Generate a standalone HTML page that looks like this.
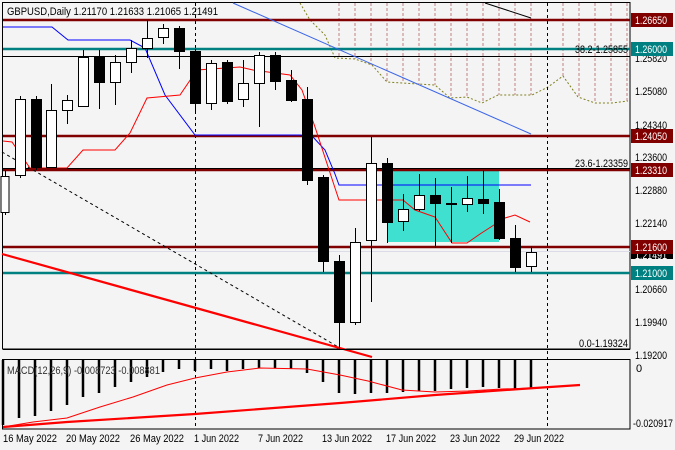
<!DOCTYPE html>
<html><head><meta charset="utf-8"><style>
html,body{margin:0;padding:0;background:#fff;}
svg{display:block;font-family:"Liberation Sans",sans-serif;}
</style></head><body>
<svg width="675" height="450" viewBox="0 0 675 450" xmlns="http://www.w3.org/2000/svg">
<rect x="0" y="0" width="675" height="450" fill="#f4f4f4"/>
<rect x="2.5" y="2.5" width="627.5" height="346.5" fill="#f4f4f4" stroke="#000" stroke-width="1"/>
<rect x="2.5" y="359.5" width="627.5" height="69.5" fill="#f4f4f4" stroke="#000" stroke-width="1"/>

<g stroke="#c08080" stroke-width="1" stroke-dasharray="3,2">
<line x1="339" y1="3" x2="339" y2="58"/><line x1="355" y1="3" x2="355" y2="59"/>
<line x1="371" y1="3" x2="371" y2="65"/><line x1="387" y1="3" x2="387" y2="82"/>
<line x1="403" y1="3" x2="403" y2="83"/><line x1="419" y1="3" x2="419" y2="84"/>
<line x1="435" y1="3" x2="435" y2="85"/><line x1="451" y1="3" x2="451" y2="98"/>
<line x1="467" y1="3" x2="467" y2="97"/><line x1="483" y1="3" x2="483" y2="103"/>
<line x1="499" y1="3" x2="499" y2="95"/><line x1="515" y1="3" x2="515" y2="95"/>
<line x1="531" y1="3" x2="531" y2="95"/><line x1="563" y1="3" x2="563" y2="76"/>
<line x1="579" y1="3" x2="579" y2="97"/><line x1="595" y1="3" x2="595" y2="103"/>
<line x1="611" y1="3" x2="611" y2="103"/><line x1="627" y1="3" x2="627" y2="101"/>
</g>
<polyline fill="none" stroke="#808020" stroke-width="1" stroke-dasharray="2,2" points="300,3 310,20 325,35 335,58 355,59 372,65 387,82 402,83 435,85 450,98 467,97 482,103 498,95 532,95 548,87 563,76 578,97 595,103 612,103 628,101"/>

<line x1="195.5" y1="3" x2="195.5" y2="429" stroke="#000" stroke-dasharray="3,3"/>
<line x1="547.5" y1="3" x2="547.5" y2="429" stroke="#000" stroke-dasharray="3,3"/>

<rect x="387" y="170" width="112" height="72" fill="#40e0d0"/>

<line x1="3" y1="56.5" x2="630" y2="56.5" stroke="#000"/>
<line x1="3" y1="251.5" x2="630" y2="251.5" stroke="#dcdce8"/>
<g stroke="#800000" stroke-width="2.5">
<line x1="3" y1="20" x2="630" y2="20"/><line x1="3" y1="136" x2="630" y2="136"/>
<line x1="3" y1="170" x2="630" y2="170"/><line x1="3" y1="247" x2="630" y2="247"/>
</g>
<line x1="3" y1="168.5" x2="630" y2="168.5" stroke="#000"/>
<g stroke="#008080" stroke-width="2.5">
<line x1="3" y1="49" x2="630" y2="49"/><line x1="3" y1="273" x2="630" y2="273"/>
</g>

<line x1="233" y1="3" x2="531" y2="134" stroke="#3a64e8" stroke-width="1"/>
<line x1="485" y1="3" x2="531" y2="18" stroke="#000" stroke-width="1"/>
<line x1="2" y1="152" x2="340" y2="348" stroke="#000" stroke-dasharray="3,3"/>
<line x1="2" y1="254" x2="372" y2="357" stroke="#ff0000" stroke-width="2.2"/>

<polyline fill="none" stroke="#0000ff" stroke-width="1" points="3,27 52,27 68,40 130,40 145,48 165,95 195,135 300,135 313,137 325,150 335,174 339,185 531,185"/>
<polyline fill="none" stroke="#ff0000" stroke-width="1" points="3,141 12,142 30,168 67,168 83,150 115,150 130,133 147,98 180,95 197,70 240,67 253,70 290,75 302,90 315,127 335,188 339,200 403,200 415,210 435,217 437,220 452,243 467,243 480,234 497,223 505,218 515,215 530,222"/>

<g stroke="#000" stroke-width="1">
<line x1="5.5" y1="170" x2="5.5" y2="215"/><rect x="1" y="176.5" width="8" height="36" fill="#fff"/>
<line x1="20.5" y1="96" x2="20.5" y2="178"/><rect x="15.5" y="99.5" width="10" height="76" fill="#fff"/>
<line x1="36.5" y1="96" x2="36.5" y2="170"/><rect x="31.5" y="99.5" width="10" height="68" fill="#000"/>
<line x1="51.5" y1="84" x2="51.5" y2="168"/><rect x="46.5" y="110.5" width="10" height="57" fill="#fff"/>
<line x1="67.5" y1="95" x2="67.5" y2="124"/><rect x="62.5" y="100.5" width="10" height="10" fill="#fff"/>
<line x1="83.5" y1="50" x2="83.5" y2="107"/><rect x="78.5" y="57.5" width="10" height="49" fill="#fff"/>
<line x1="99.5" y1="50" x2="99.5" y2="109"/><rect x="94.5" y="57.5" width="10" height="25" fill="#000"/>
<line x1="115.5" y1="55" x2="115.5" y2="105"/><rect x="110.5" y="62.5" width="10" height="20" fill="#fff"/>
<line x1="131.5" y1="40" x2="131.5" y2="73"/><rect x="126.5" y="48.5" width="10" height="14" fill="#fff"/>
<line x1="147.5" y1="20" x2="147.5" y2="58"/><rect x="142.5" y="38.5" width="10" height="10" fill="#fff"/>
<line x1="163.5" y1="24" x2="163.5" y2="44"/><rect x="158.5" y="28.5" width="10" height="9" fill="#fff"/>
<line x1="179.5" y1="26" x2="179.5" y2="69"/><rect x="174.5" y="28.5" width="10" height="23" fill="#000"/>
<line x1="195.5" y1="49" x2="195.5" y2="114"/><rect x="190.5" y="51.5" width="10" height="52" fill="#000"/>
<line x1="211.5" y1="60" x2="211.5" y2="110"/><rect x="206.5" y="63.5" width="10" height="40" fill="#fff"/>
<line x1="227.5" y1="60" x2="227.5" y2="104"/><rect x="222.5" y="62.5" width="10" height="39" fill="#000"/>
<line x1="243.5" y1="60" x2="243.5" y2="107"/><rect x="238.5" y="83.5" width="10" height="16" fill="#fff"/>
<line x1="259.5" y1="52" x2="259.5" y2="127"/><rect x="254.5" y="55.5" width="10" height="28" fill="#fff"/>
<line x1="275.5" y1="52" x2="275.5" y2="90"/><rect x="270.5" y="55.5" width="10" height="26" fill="#000"/>
<line x1="291.5" y1="70" x2="291.5" y2="102"/><rect x="286.5" y="80.5" width="10" height="20" fill="#000"/>
<line x1="307.5" y1="87" x2="307.5" y2="185"/><rect x="302.5" y="99.5" width="10" height="81" fill="#000"/>
<line x1="323.5" y1="175" x2="323.5" y2="272"/><rect x="318.5" y="177.5" width="10" height="84" fill="#000"/>
<line x1="339.5" y1="255" x2="339.5" y2="349"/><rect x="334.5" y="261.5" width="10" height="61" fill="#000"/>
<line x1="355.5" y1="228" x2="355.5" y2="325"/><rect x="350.5" y="242.5" width="10" height="80" fill="#fff"/>
<line x1="371.5" y1="137" x2="371.5" y2="302"/><rect x="366.5" y="163.5" width="10" height="77" fill="#fff"/>
<line x1="387.5" y1="158" x2="387.5" y2="243"/><rect x="382.5" y="163.5" width="10" height="59" fill="#000"/>
<line x1="403.5" y1="194" x2="403.5" y2="231"/><rect x="398.5" y="209.5" width="10" height="12" fill="#fff"/>
<line x1="419.5" y1="174" x2="419.5" y2="211"/><rect x="414.5" y="195.5" width="10" height="14" fill="#fff"/>
<line x1="435.5" y1="178" x2="435.5" y2="248"/><rect x="430.5" y="195.5" width="10" height="8" fill="#000"/>
<line x1="451.5" y1="187" x2="451.5" y2="243"/><rect x="446.5" y="203.5" width="10" height="1" fill="#000"/>
<line x1="467.5" y1="176" x2="467.5" y2="212"/><rect x="462.5" y="198.5" width="10" height="6" fill="#fff"/>
<line x1="483.5" y1="170" x2="483.5" y2="214"/><rect x="478.5" y="199.5" width="10" height="4" fill="#000"/>
<line x1="499.5" y1="189" x2="499.5" y2="240"/><rect x="494.5" y="202.5" width="10" height="36" fill="#000"/>
<line x1="515.5" y1="225" x2="515.5" y2="272"/><rect x="510.5" y="238.5" width="10" height="29" fill="#000"/>
<line x1="531.5" y1="246" x2="531.5" y2="272"/><rect x="526.5" y="252.5" width="10" height="14" fill="#fff"/>
</g>

<line x1="3" y1="349.5" x2="630" y2="349.5" stroke="#000"/>

<text x="7" y="15" font-size="11" fill="#000" textLength="211" lengthAdjust="spacingAndGlyphs">GBPUSD,Daily  1.21170 1.21633 1.21065 1.21491</text>
<g font-size="11" fill="#000">
<text x="575" y="53" textLength="53" lengthAdjust="spacingAndGlyphs">38.2-1.25855</text>
<text x="575" y="167" textLength="53" lengthAdjust="spacingAndGlyphs">23.6-1.23359</text>
<text x="579" y="347" textLength="49" lengthAdjust="spacingAndGlyphs">0.0-1.19324</text>
</g>

<g font-size="11" fill="#000" lengthAdjust="spacingAndGlyphs">
<text x="635" y="62" textLength="32" lengthAdjust="spacingAndGlyphs">1.25820</text>
<text x="635" y="95" textLength="32" lengthAdjust="spacingAndGlyphs">1.25080</text>
<text x="635" y="129" textLength="32" lengthAdjust="spacingAndGlyphs">1.24340</text>
<text x="635" y="161" textLength="32" lengthAdjust="spacingAndGlyphs">1.23600</text>
<text x="635" y="194" textLength="32" lengthAdjust="spacingAndGlyphs">1.22880</text>
<text x="635" y="227" textLength="32" lengthAdjust="spacingAndGlyphs">1.22140</text>
<text x="635" y="293" textLength="32" lengthAdjust="spacingAndGlyphs">1.20660</text>
<text x="635" y="326" textLength="32" lengthAdjust="spacingAndGlyphs">1.19940</text>
<text x="635" y="359" textLength="32" lengthAdjust="spacingAndGlyphs">1.19200</text>
</g>
<rect x="631" y="251" width="42" height="8" fill="#000"/>
<text x="635" y="259" font-size="11" fill="#fff" textLength="32" lengthAdjust="spacingAndGlyphs">1.21491</text>
<g font-size="11" fill="#fff">
<rect x="631" y="13" width="42" height="14" fill="#800000"/><text x="635" y="24" textLength="32" lengthAdjust="spacingAndGlyphs">1.26650</text>
<rect x="631" y="42" width="42" height="14" fill="#008080"/><text x="635" y="53" textLength="32" lengthAdjust="spacingAndGlyphs">1.26000</text>
<rect x="631" y="129" width="42" height="14" fill="#800000"/><text x="635" y="140" textLength="32" lengthAdjust="spacingAndGlyphs">1.24050</text>
<rect x="631" y="163" width="42" height="14" fill="#800000"/><text x="635" y="174" textLength="32" lengthAdjust="spacingAndGlyphs">1.23310</text>
<rect x="631" y="240" width="42" height="14" fill="#800000"/><text x="635" y="251" textLength="32" lengthAdjust="spacingAndGlyphs">1.21600</text>
<rect x="631" y="266" width="42" height="14" fill="#008080"/><text x="635" y="277" textLength="32" lengthAdjust="spacingAndGlyphs">1.21000</text>
</g>

<g stroke="#000" stroke-width="2.5">
<line x1="3" y1="360" x2="3" y2="425"/><line x1="19" y1="360" x2="19" y2="418"/>
<line x1="35" y1="360" x2="35" y2="416"/><line x1="51" y1="360" x2="51" y2="411"/>
<line x1="67" y1="360" x2="67" y2="405"/><line x1="83" y1="360" x2="83" y2="397"/>
<line x1="99" y1="360" x2="99" y2="393"/><line x1="115" y1="360" x2="115" y2="387"/>
<line x1="131" y1="360" x2="131" y2="382"/><line x1="147" y1="360" x2="147" y2="377"/>
<line x1="163" y1="360" x2="163" y2="372"/><line x1="179" y1="360" x2="179" y2="369"/>
<line x1="195" y1="360" x2="195" y2="371"/><line x1="211" y1="360" x2="211" y2="369"/>
<line x1="227" y1="360" x2="227" y2="371"/><line x1="243" y1="360" x2="243" y2="369"/>
<line x1="259" y1="360" x2="259" y2="368"/><line x1="275" y1="360" x2="275" y2="368"/>
<line x1="291" y1="360" x2="291" y2="369"/><line x1="307" y1="360" x2="307" y2="373"/>
<line x1="323" y1="360" x2="323" y2="382"/><line x1="339" y1="360" x2="339" y2="393"/>
<line x1="355" y1="360" x2="355" y2="394"/><line x1="371" y1="360" x2="371" y2="393"/>
<line x1="387" y1="360" x2="387" y2="393"/><line x1="403" y1="360" x2="403" y2="392"/>
<line x1="419" y1="360" x2="419" y2="391"/><line x1="435" y1="360" x2="435" y2="391"/>
<line x1="451" y1="360" x2="451" y2="389"/><line x1="467" y1="360" x2="467" y2="388"/>
<line x1="483" y1="360" x2="483" y2="387"/><line x1="499" y1="360" x2="499" y2="388"/>
<line x1="515" y1="360" x2="515" y2="389"/><line x1="531" y1="360" x2="531" y2="388"/>
</g>
<polyline fill="none" stroke="#ff0000" stroke-width="1" points="3,427 33,422 67,418 100,407 133,397 167,385 195,378 227,372 260,368 307,369 340,375 368,381 402,390 435,392 468,391 502,389 535,388"/>
<polyline fill="none" stroke="#ff0000" stroke-width="2.2" points="3,427 67,422 195,414 340,403 435,395 535,388 580,385"/>
<text x="7" y="374" font-size="11" fill="#333" textLength="153" lengthAdjust="spacingAndGlyphs">MACD(12,26,9) -0.008723 -0.008881</text>
<text x="636" y="372" font-size="11" fill="#000">0</text>
<text x="633" y="427" font-size="11" fill="#000" textLength="40" lengthAdjust="spacingAndGlyphs">-0.020917</text>

<g font-size="11" fill="#000">
<text x="3" y="442" textLength="54" lengthAdjust="spacingAndGlyphs">16 May 2022</text>
<text x="66" y="442" textLength="54" lengthAdjust="spacingAndGlyphs">20 May 2022</text>
<text x="130" y="442" textLength="54" lengthAdjust="spacingAndGlyphs">26 May 2022</text>
<text x="194" y="442" textLength="45" lengthAdjust="spacingAndGlyphs">1 Jun 2022</text>
<text x="258" y="442" textLength="45" lengthAdjust="spacingAndGlyphs">7 Jun 2022</text>
<text x="322" y="442" textLength="50" lengthAdjust="spacingAndGlyphs">13 Jun 2022</text>
<text x="386" y="442" textLength="50" lengthAdjust="spacingAndGlyphs">17 Jun 2022</text>
<text x="450" y="442" textLength="50" lengthAdjust="spacingAndGlyphs">23 Jun 2022</text>
<text x="514" y="442" textLength="50" lengthAdjust="spacingAndGlyphs">29 Jun 2022</text>
</g>
</svg>
</body></html>
